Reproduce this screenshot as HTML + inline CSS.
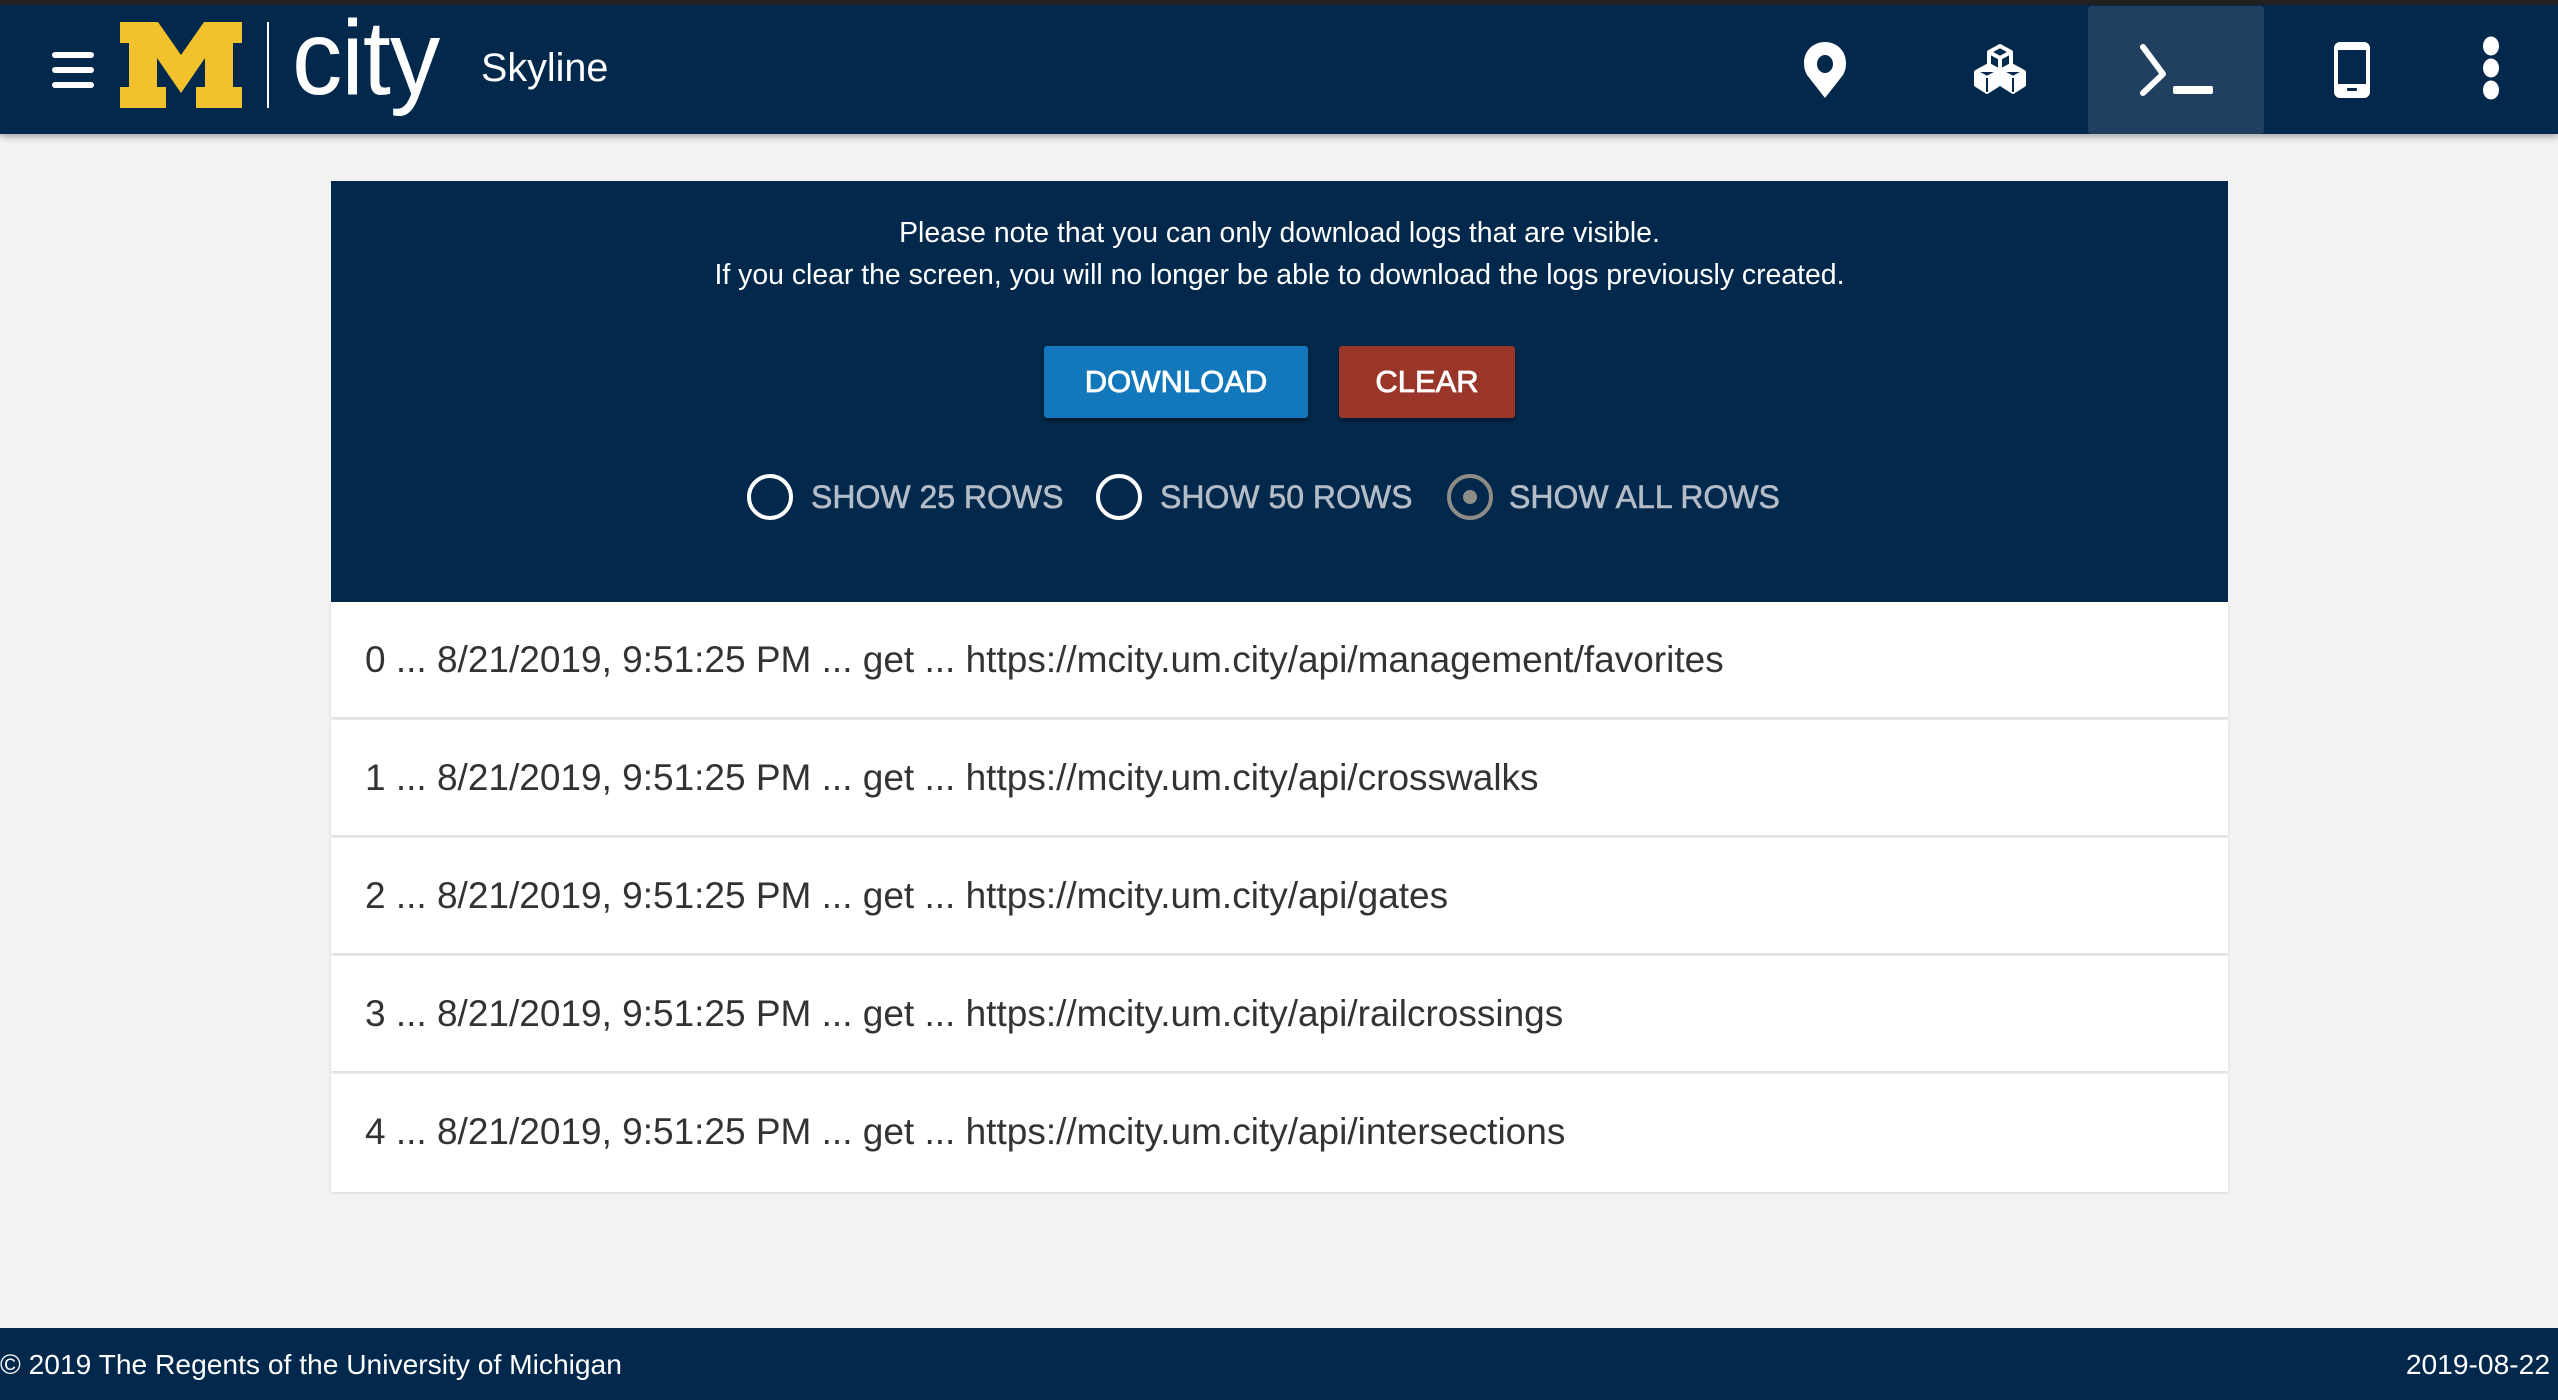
<!DOCTYPE html>
<html><head><meta charset="utf-8"><style>
*{margin:0;padding:0;box-sizing:border-box}
body{width:2558px;height:1400px;background:#f2f2f2;font-family:"Liberation Sans",sans-serif;position:relative;overflow:hidden}
.top{position:absolute;left:0;top:0;width:2558px;height:6px;background:#222}
.hdr{position:absolute;left:0;top:5px;width:2558px;height:129px;background:#02284b;box-shadow:0 3px 6px rgba(0,0,0,.3)}
.abs{position:absolute}
.panel{position:absolute;left:331px;top:181px;width:1897px;height:421px;background:#02284b;color:#fff;text-align:center}
.note{position:absolute;left:0;width:100%;font-size:28.4px;line-height:32px}
.btn{position:absolute;top:165px;height:72px;color:#fff;font-size:31px;line-height:72px;text-align:center;border-radius:3px;box-shadow:0 3px 5px rgba(0,0,0,.4);-webkit-text-stroke:0.8px #fff}
.radio{position:absolute;top:293px;width:46px;height:46px;border-radius:50%;border:4px solid #fff}
.rl{position:absolute;top:296px;font-size:32px;line-height:40px;color:#b4bcc8;white-space:nowrap;-webkit-text-stroke:0.6px #b4bcc8}
.row{position:absolute;left:331px;width:1897px;height:115px;background:#fff;font-size:37px;color:#333;line-height:115px;padding-left:34px;box-shadow:0 1px 3px rgba(0,0,0,.12)}
.foot{position:absolute;left:0;top:1328px;width:2558px;height:72px;background:#02284b;color:#fff;font-size:28.2px;line-height:72px}
</style></head><body>
<div class="top"></div>
<div class="hdr"></div>
<div class="abs" style="left:52px;top:52px;width:42px;height:6px;background:#fff;border-radius:3px"></div>
<div class="abs" style="left:52px;top:67px;width:42px;height:6px;background:#fff;border-radius:3px"></div>
<div class="abs" style="left:52px;top:82px;width:42px;height:6px;background:#fff;border-radius:3px"></div>
<svg class="abs" style="left:120px;top:22px" width="122" height="86" viewBox="0 0 122 86">
<path fill="#f2c22d" d="M0 0H38L61 33L84 0H122V21H113V65H122V86H76V65H85V36L61 71L37 36V65H46V86H0V65H9V21H0Z"/>
</svg>
<div class="abs" style="left:267px;top:22px;width:2px;height:86px;background:#fff"></div>
<div class="abs" style="left:292px;top:-2px;font-size:106px;line-height:120px;color:#fff;transform:scaleX(0.95);transform-origin:left top;letter-spacing:-1px">city</div>
<div class="abs" style="left:481px;top:46px;font-size:39.5px;line-height:44px;color:#fff">Skyline</div>
<div class="abs" style="left:2088px;top:6px;width:176px;height:128px;background:#21405f;border-radius:3px"></div>
<svg class="abs" style="left:1803px;top:42px" width="44" height="56" viewBox="0 0 44 56">
<path fill="#fff" fill-rule="evenodd" d="M22 0C10 0 1 9 1 21C1 26 2 29 4 33L22 56L40 33C42 29 43 26 43 21C43 9 34 0 22 0ZM22 13A8 9 0 1 1 22 31A8 9 0 1 1 22 13Z"/>
</svg>
<svg class="abs" style="left:1971px;top:44px" width="58" height="52" viewBox="0 0 58 52" fill="none" stroke="#fff" stroke-width="4" stroke-linejoin="round">
<path d="M29 2L40 8V21L29 27L18 21V8Z M18 8L29 14L40 8 M29 14V27" />
<path d="M16 22L27 28V41L16 48L5 41V28Z M5 28L16 34L27 28 M16 34V48" fill="#fff"/>
<path d="M42 22L53 28V41L42 48L31 41V28Z M31 28L42 34L53 28 M42 34V48" fill="#fff"/>
<path d="M16 34V48 M42 34V48" stroke="#02284b" stroke-width="2"/>
</svg>
<svg class="abs" style="left:2140px;top:44px" width="76" height="54" viewBox="0 0 76 54">
<path d="M3 3L23 30L3 49" fill="none" stroke="#fff" stroke-width="6" stroke-linecap="round" stroke-linejoin="round"/>
<rect x="33" y="42" width="40" height="8" rx="2" fill="#fff"/>
</svg>
<svg class="abs" style="left:2334px;top:42px" width="36" height="56" viewBox="0 0 36 56">
<rect x="2" y="2" width="32" height="52" rx="4" fill="none" stroke="#fff" stroke-width="4"/>
<rect x="2" y="2" width="32" height="6" fill="#fff"/><rect x="2" y="42" width="32" height="12" rx="3" fill="#fff"/>
<rect x="13" y="46" width="10" height="3" rx="1" fill="#02284b"/>
</svg>
<svg class="abs" style="left:2481px;top:36px" width="20" height="64" viewBox="0 0 20 64" fill="#fff">
<ellipse cx="10" cy="10" rx="8" ry="9.5"/><ellipse cx="10" cy="32" rx="8" ry="9.5"/><ellipse cx="10" cy="54" rx="8" ry="9.5"/>
</svg>

<div class="panel">
<div class="note" style="top:36px">Please note that you can only download logs that are visible.</div>
<div class="note" style="top:78px">If you clear the screen, you will no longer be able to download the logs previously created.</div>
<div class="btn" style="left:713px;width:264px;background:#1378bb">DOWNLOAD</div>
<div class="btn" style="left:1008px;width:176px;background:#9a352a">CLEAR</div>
<div class="radio" style="left:416px"></div><div class="rl" style="left:480px">SHOW 25 ROWS</div>
<div class="radio" style="left:765px"></div><div class="rl" style="left:829px">SHOW 50 ROWS</div>
<div class="radio" style="left:1116px;border-color:#8d8c86"></div>
<div class="abs" style="left:1132px;top:309px;width:14px;height:14px;border-radius:50%;background:#8d8c86"></div>
<div class="rl" style="left:1178px">SHOW ALL ROWS</div>
</div>

<div class="row" style="top:602px">0 ... 8/21/2019, 9:51:25 PM ... get ... https://mcity.um.city/api/management/favorites</div>
<div class="row" style="top:720px">1 ... 8/21/2019, 9:51:25 PM ... get ... https://mcity.um.city/api/crosswalks</div>
<div class="row" style="top:838px">2 ... 8/21/2019, 9:51:25 PM ... get ... https://mcity.um.city/api/gates</div>
<div class="row" style="top:956px">3 ... 8/21/2019, 9:51:25 PM ... get ... https://mcity.um.city/api/railcrossings</div>
<div class="row" style="top:1074px;height:118px">4 ... 8/21/2019, 9:51:25 PM ... get ... https://mcity.um.city/api/intersections</div>

<div class="foot"><span style="position:absolute;left:0">© 2019 The Regents of the University of Michigan</span><span style="position:absolute;right:8px">2019-08-22</span></div>
</body></html>
